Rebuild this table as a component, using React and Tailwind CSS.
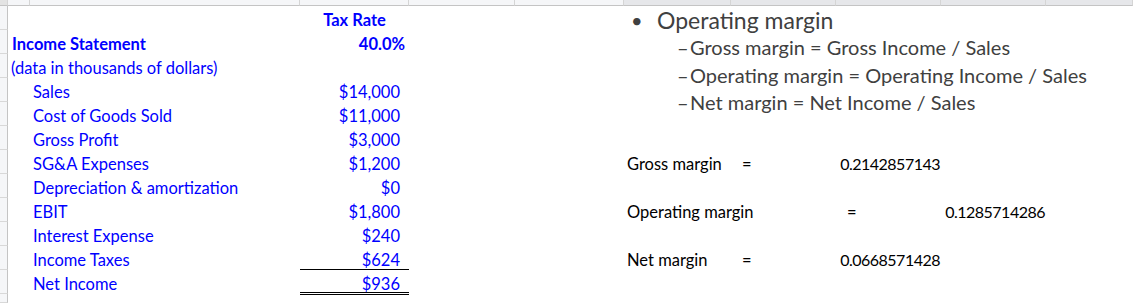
import React from "react";

const cell = "whitespace-nowrap text-[16.5px] leading-[24px] h-[24px] pt-[2px] overflow-visible";
const blue = "text-[#0000ff]";
const num = "tracking-[-0.5px] text-[16px]";

function Hdr({ cls }) {
  return <div className={`border-r border-b border-r-[#d5d5d5] border-b-[#c4c4c4] ${cls}`} />;
}

function RowHdr({ cls }) {
  return <div className={`col-start-1 bg-[#f5f6f8] border-r border-b border-r-[#c4c4c4] border-b-[#d8d8d8] ${cls}`} />;
}

export default function App() {
  return (
    <div className="w-[1133px] h-[303px] overflow-hidden bg-white font-['Lato',sans-serif]">
      <div className="grid h-full grid-cols-[8px_22px_270px_109px_106px_109px_107px_105px_105px_105px_1fr] grid-rows-[6px_repeat(12,24px)_1fr]">
        {/* column header strip */}
        <Hdr cls="col-start-1 row-start-1 bg-[#e3e3e3]" />
        <Hdr cls="col-start-2 row-start-1 bg-[#f5f6f8]" />
        <Hdr cls="col-start-3 row-start-1 bg-[#f5f6f8]" />
        <Hdr cls="col-start-4 row-start-1 bg-[#f5f6f8]" />
        <Hdr cls="col-start-5 row-start-1 bg-[#f5f6f8]" />
        <Hdr cls="col-start-6 row-start-1 bg-[#f5f6f8]" />
        <Hdr cls="col-start-7 row-start-1 bg-[#e6e7ea]" />
        <Hdr cls="col-start-8 row-start-1 bg-[#e6e7ea]" />
        <Hdr cls="col-start-9 row-start-1 bg-[#e6e7ea]" />
        <Hdr cls="col-start-10 row-start-1 bg-[#e6e7ea]" />
        <Hdr cls="col-start-11 row-start-1 bg-[#e6e7ea]" />

        {/* row header strip */}
        <RowHdr cls="row-start-2" />
        <RowHdr cls="row-start-3" />
        <RowHdr cls="row-start-4" />
        <RowHdr cls="row-start-5" />
        <RowHdr cls="row-start-6" />
        <RowHdr cls="row-start-7" />
        <RowHdr cls="row-start-8" />
        <RowHdr cls="row-start-9" />
        <RowHdr cls="row-start-10" />
        <RowHdr cls="row-start-11" />
        <RowHdr cls="row-start-12" />
        <RowHdr cls="row-start-13" />
        <RowHdr cls="row-start-14" />

        {/* Income statement */}
        <div className={`${cell} ${blue} col-start-4 row-start-2 font-bold text-center`}>Tax Rate</div>
        <div className={`${cell} ${blue} col-start-2 col-span-2 row-start-3 font-bold pl-[4px]`}>Income Statement</div>
        <div className={`${cell} ${blue} col-start-4 row-start-3 font-bold text-right pr-[4px]`}>40.0%</div>
        <div className={`${cell} ${blue} col-start-2 col-span-2 row-start-4 pl-[3px]`}>(data in thousands of dollars)</div>

        <div className={`${cell} ${blue} col-start-3 row-start-5 pl-[3px]`}>Sales</div>
        <div className={`${cell} ${blue} col-start-4 row-start-5 text-right pr-[9px]`}>$14,000</div>
        <div className={`${cell} ${blue} col-start-3 row-start-6 pl-[3px]`}>Cost of Goods Sold</div>
        <div className={`${cell} ${blue} col-start-4 row-start-6 text-right pr-[9px]`}>$11,000</div>
        <div className={`${cell} ${blue} col-start-3 row-start-7 pl-[3px]`}>Gross Profit</div>
        <div className={`${cell} ${blue} col-start-4 row-start-7 text-right pr-[9px]`}>$3,000</div>
        <div className={`${cell} ${blue} col-start-3 row-start-8 pl-[3px]`}>SG&amp;A Expenses</div>
        <div className={`${cell} ${blue} col-start-4 row-start-8 text-right pr-[9px]`}>$1,200</div>
        <div className={`${cell} ${blue} col-start-3 row-start-9 pl-[3px]`}>Depreciation &amp; amortization</div>
        <div className={`${cell} ${blue} col-start-4 row-start-9 text-right pr-[9px]`}>$0</div>
        <div className={`${cell} ${blue} col-start-3 row-start-10 pl-[3px]`}>EBIT</div>
        <div className={`${cell} ${blue} col-start-4 row-start-10 text-right pr-[9px]`}>$1,800</div>
        <div className={`${cell} ${blue} col-start-3 row-start-11 pl-[3px]`}>Interest Expense</div>
        <div className={`${cell} ${blue} col-start-4 row-start-11 text-right pr-[9px]`}>$240</div>
        <div className={`${cell} ${blue} col-start-3 row-start-12 pl-[3px]`}>Income Taxes</div>
        <div className={`${cell} ${blue} col-start-4 row-start-12 text-right pr-[9px] border-b border-black`}>$624</div>
        <div className={`${cell} ${blue} col-start-3 row-start-13 pl-[3px]`}>Net Income</div>
        <div className={`whitespace-nowrap text-[16.5px] leading-[24px] pt-[2px] ${blue} col-start-4 row-start-13 self-start h-[25px] text-right pr-[9px] border-b-[3px] border-double border-black`}>$936</div>

        {/* pasted slide text */}
        <div className="col-start-7 col-span-5 row-start-2 row-span-4 pt-[1px] text-[#404040] whitespace-nowrap">
          <div className="flex items-center h-[27px] text-[23px] leading-[27px]">
            <span className="w-[33px] pl-[7px] text-[20px]">•</span>
            <span>Operating margin</span>
          </div>
          <div className="flex h-[27.5px] text-[20px] leading-[27.5px]">
            <span className="w-[66px] pl-[53px]">–</span>
            <span>Gross margin = Gross Income / Sales</span>
          </div>
          <div className="flex h-[27.5px] text-[20px] leading-[27.5px]">
            <span className="w-[66px] pl-[53px]">–</span>
            <span>Operating margin = Operating Income / Sales</span>
          </div>
          <div className="flex h-[27.5px] text-[20px] leading-[27.5px]">
            <span className="w-[66px] pl-[53px]">–</span>
            <span>Net margin = Net Income / Sales</span>
          </div>
        </div>

        {/* margins */}
        <div className={`${cell} text-black col-start-7 row-start-8 pl-[3px]`}>Gross margin</div>
        <div className={`${cell} text-black col-start-8 row-start-8 pl-[11px]`}>=</div>
        <div className={`${cell} ${num} text-black col-start-9 row-start-8 text-right pr-[1px]`}>0.2142857143</div>

        <div className={`${cell} text-black col-start-7 row-start-10 pl-[3px]`}>Operating margin</div>
        <div className={`${cell} text-black col-start-9 row-start-10 pl-[11px]`}>=</div>
        <div className={`${cell} ${num} text-black col-start-10 row-start-10 text-right pr-[1px]`}>0.1285714286</div>

        <div className={`${cell} text-black col-start-7 row-start-12 pl-[3px]`}>Net margin</div>
        <div className={`${cell} text-black col-start-8 row-start-12 pl-[11px]`}>=</div>
        <div className={`${cell} ${num} text-black col-start-9 row-start-12 text-right pr-[1px]`}>0.0668571428</div>
      </div>
    </div>
  );
}
